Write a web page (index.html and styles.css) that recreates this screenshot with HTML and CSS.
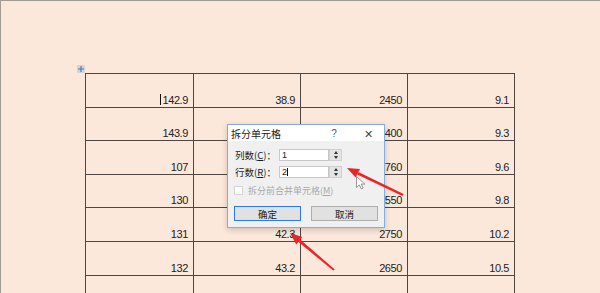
FILE: index.html
```html
<!DOCTYPE html>
<html lang="zh-CN">
<head>
  <meta charset="UTF-8" />
  <title>拆分单元格</title>
  <link rel="stylesheet" href="styles.css">
</head>
<body>
  <div class="page">
    <div class="doc">
      <span class="table-handle">
        <svg width="8" height="8" viewBox="0 0 8 8"><path d="M4 1v6M1 4h6" stroke="#4a78c8" stroke-width="1.2"/></svg>
      </span>
      <table class="grid">
        <tr><td><span class="caret"></span>142.9</td><td>38.9</td><td>2450</td><td>9.1</td></tr>
        <tr><td>143.9</td><td></td><td>2400</td><td>9.3</td></tr>
        <tr><td>107</td><td></td><td>2760</td><td>9.6</td></tr>
        <tr><td>130</td><td></td><td>2550</td><td>9.8</td></tr>
        <tr><td>131</td><td>42.3</td><td>2750</td><td>10.2</td></tr>
        <tr><td>132</td><td>43.2</td><td>2650</td><td>10.5</td></tr>
        <tr><td></td><td></td><td></td><td></td></tr>
      </table>
    </div>

    <div class="dialog">
      <div class="titlebar">
        <span class="title">拆分单元格</span>
        <span class="help">?</span>
        <span class="close">✕</span>
      </div>
      <div class="body">
        <div class="field">
          <label>列数(<u>C</u>)：</label>
          <div class="input">1</div>
          <div class="spin"><i class="up"></i><i class="down"></i></div>
        </div>
        <div class="field">
          <label>行数(<u>R</u>)：</label>
          <div class="input">2<span class="text-caret"></span></div>
          <div class="spin"><i class="up"></i><i class="down"></i></div>
        </div>
        <div class="check">
          <span class="box"></span>
          <span>拆分前合并单元格(<u>M</u>)</span>
        </div>
        <div class="buttons">
          <button class="btn primary">确定</button>
          <button class="btn">取消</button>
        </div>
      </div>
    </div>

    <svg class="arrows" width="600" height="293" viewBox="0 0 600 293">
      <polygon points="402.6,193 401.4,195 356.2,173.6 357.4,171" fill="#e8262a"/>
      <polygon points="346,167 359,168 354.6,176.6" fill="#e8262a"/>
      <polygon points="333.8,268.4 332.2,269.6 297.2,240.8 299.2,238.6" fill="#e8262a"/>
      <polygon points="289,232 301.4,236 295.2,243.4" fill="#e8262a"/>
    </svg>

    <svg class="pointer" width="11" height="14" viewBox="0 0 11 14">
      <path d="M0.5 0.5v11l2.8-2.6 2 4 1.8-0.9-2-3.9h3.8z" fill="#fff" stroke="#8a8a8a" stroke-width="0.9"/>
    </svg>
  </div>
</body>
</html>
```

FILE: styles.css
```css
* { box-sizing: border-box; }
html, body {
  margin: 0;
  height: 100%;
}
body {
  background: #fce8da;
  font-family: "Liberation Sans", Arial, sans-serif;
  overflow: hidden;
}
.page {
  position: relative;
  height: 100%;
  overflow: hidden;
  border-top: 1px solid #a39a94;
  border-left: 1px solid #a39a94;
  padding: 72px 0 0 84px;
}
.doc {
  position: relative;
}
.table-handle {
  position: absolute;
  left: -8px;
  top: -8px;
  width: 8px;
  height: 8px;
  background: #d9d3cf;
  display: flex;
}
.grid {
  border-collapse: collapse;
  table-layout: fixed;
  width: 430px;
}
.grid td {
  border: 1px solid #4f4641;
  height: 33.6px;
  width: 107px;
  padding: 0 5px 1px 0;
  text-align: right;
  vertical-align: bottom;
  font-size: 11px;
  letter-spacing: -0.4px;
  color: #222;
  line-height: 12px;
}
.grid td:first-child { width: 108px; }
.caret {
  display: inline-block;
  width: 1px;
  height: 11px;
  background: #111;
  vertical-align: -1px;
  margin-right: 1px;
}

.dialog {
  position: absolute;
  left: 226px;
  top: 123px;
  width: 158px;
  height: 104px;
  background: #f0f0f0;
  border: 1px solid #86acd8;
  box-shadow: 0 2px 6px rgba(0, 0, 0, 0.18);
  font-family: "Noto Sans CJK SC", "Liberation Sans", sans-serif;
  font-size: 9.5px;
  color: #1a1a1a;
}
.titlebar {
  display: flex;
  align-items: center;
  height: 16px;
  background: #fff;
  padding-left: 3px;
}
.title { flex: 1; font-size: 10px; }
.help {
  width: 24px;
  margin-right: 6px;
  text-align: center;
  color: #555;
  font-family: "Liberation Sans", sans-serif;
  font-size: 10px;
}
.close {
  width: 32px;
  text-align: center;
  color: #444;
  font-size: 11px;
}
.body {
  padding: 8px 6px 0 6px;
}
.field {
  display: flex;
  align-items: center;
  height: 12px;
  margin-bottom: 5px;
}
.field label {
  width: 45px;
  padding-left: 1px;
}
.input {
  width: 50px;
  height: 12px;
  background: #fff;
  border: 1px solid #c8c8c8;
  font-family: "Liberation Sans", sans-serif;
  font-size: 9px;
  line-height: 10px;
  padding-left: 2px;
}
.text-caret {
  display: inline-block;
  width: 1px;
  height: 8px;
  background: #111;
  vertical-align: -1px;
}
.spin {
  width: 13px;
  height: 12px;
  background: #e4e4e4;
  border: 1px solid #d0d0d0;
  display: flex;
  flex-direction: column;
  align-items: center;
  justify-content: space-around;
}
.spin i {
  width: 0;
  height: 0;
  border-left: 2.5px solid transparent;
  border-right: 2.5px solid transparent;
}
.spin .up { border-bottom: 3px solid #333; }
.spin .down { border-top: 3px solid #333; }
.check {
  display: flex;
  align-items: center;
  gap: 5px;
  margin-top: 6px;
  color: #a8a8a8;
  font-size: 9px;
}
.check .box {
  width: 9px;
  height: 9px;
  background: #fff;
  border: 1px solid #d6d6d6;
}
.buttons {
  display: flex;
  gap: 10px;
  margin-top: 9px;
}
.btn {
  width: 67px;
  height: 15px;
  padding: 0;
  background: #e1e1e1;
  border: 1px solid #adadad;
  font-family: "Noto Sans CJK SC", sans-serif;
  font-size: 9.5px;
  line-height: 12px;
  color: #1a1a1a;
}
.btn.primary {
  border: 1px solid #2f7bd6;
  box-shadow: inset 0 0 0 1px #cfe1f5;
}
.arrows {
  position: absolute;
  left: 0;
  top: 0;
  pointer-events: none;
}
.pointer {
  position: absolute;
  left: 355px;
  top: 175px;
}
```
